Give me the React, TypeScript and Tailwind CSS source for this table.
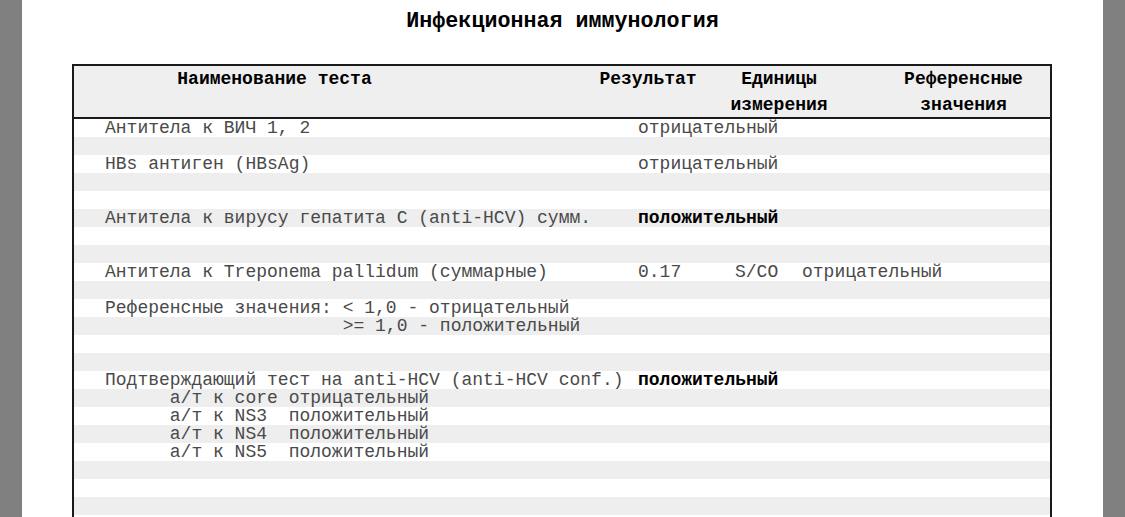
import React from "react";

type Row = {
  name?: string;
  result?: string;
  bold?: boolean;
  units?: string;
  ref?: string;
};

const rows: Row[] = [
  { name: "Антитела к ВИЧ 1, 2", result: "отрицательный" },
  {},
  { name: "HBs антиген (HBsAg)", result: "отрицательный" },
  {},
  {},
  { name: "Антитела к вирусу гепатита C (anti-HCV) сумм.", result: "положительный", bold: true },
  {},
  {},
  { name: "Антитела к Treponema pallidum (суммарные)", result: "0.17", units: "S/CO", ref: "отрицательный" },
  {},
  { name: "Референсные значения: < 1,0 - отрицательный" },
  { name: "                      >= 1,0 - положительный" },
  {},
  {},
  { name: "Подтверждающий тест на anti-HCV (anti-HCV conf.)", result: "положительный", bold: true },
  { name: "      а/т к core отрицательный" },
  { name: "      а/т к NS3  положительный" },
  { name: "      а/т к NS4  положительный" },
  { name: "      а/т к NS5  положительный" },
  {},
  {},
  {},
];

export default function App() {
  return (
    <div
      className="h-screen overflow-hidden bg-[#808080] px-[22px]"
      style={{ fontFamily: "'Liberation Mono', 'Courier New', monospace" }}
    >
      <div className="h-full bg-white flex flex-col">
        <h1 className="pt-[11px] text-center text-[21.7px] leading-[22px] font-bold text-black">
          Инфекционная иммунология
        </h1>
        <div className="mt-[31px] ml-[50px] mr-[51px] border-2 border-b-0 border-[#1a1a1a] flex-1">
          <div className="flex h-[53px] bg-[#efefef] text-[18px] leading-[26px] font-bold text-black border-b-2 border-[#1a1a1a]">
            <div className="w-[401px] text-center">Наименование теста</div>
            <div className="w-[108px]" />
            <div className="w-[130px] text-center">Результат</div>
            <div className="w-[132px] text-center">
              Единицы
              <br />
              измерения
            </div>
            <div className="w-[32px]" />
            <div className="flex-1 text-center">
              Референсные
              <br />
              значения
            </div>
          </div>
          <div className="text-[18px] leading-[18px] text-[#4a4a4a]">
            {rows.map((r, i) => (
              <div
                key={i}
                className={`flex h-[18px] whitespace-pre ${i % 2 === 1 ? "bg-[#eeeeee]" : "bg-white"}`}
              >
                <div className="w-[564px] pl-[31px] shrink-0">{r.name ?? ""}</div>
                <div className={`w-[97px] shrink-0 ${r.bold ? "font-bold text-black" : ""}`}>
                  {r.result ?? ""}
                </div>
                <div className="w-[67px] shrink-0">{r.units ?? ""}</div>
                <div className="flex-1">{r.ref ?? ""}</div>
              </div>
            ))}
          </div>
        </div>
      </div>
    </div>
  );
}
